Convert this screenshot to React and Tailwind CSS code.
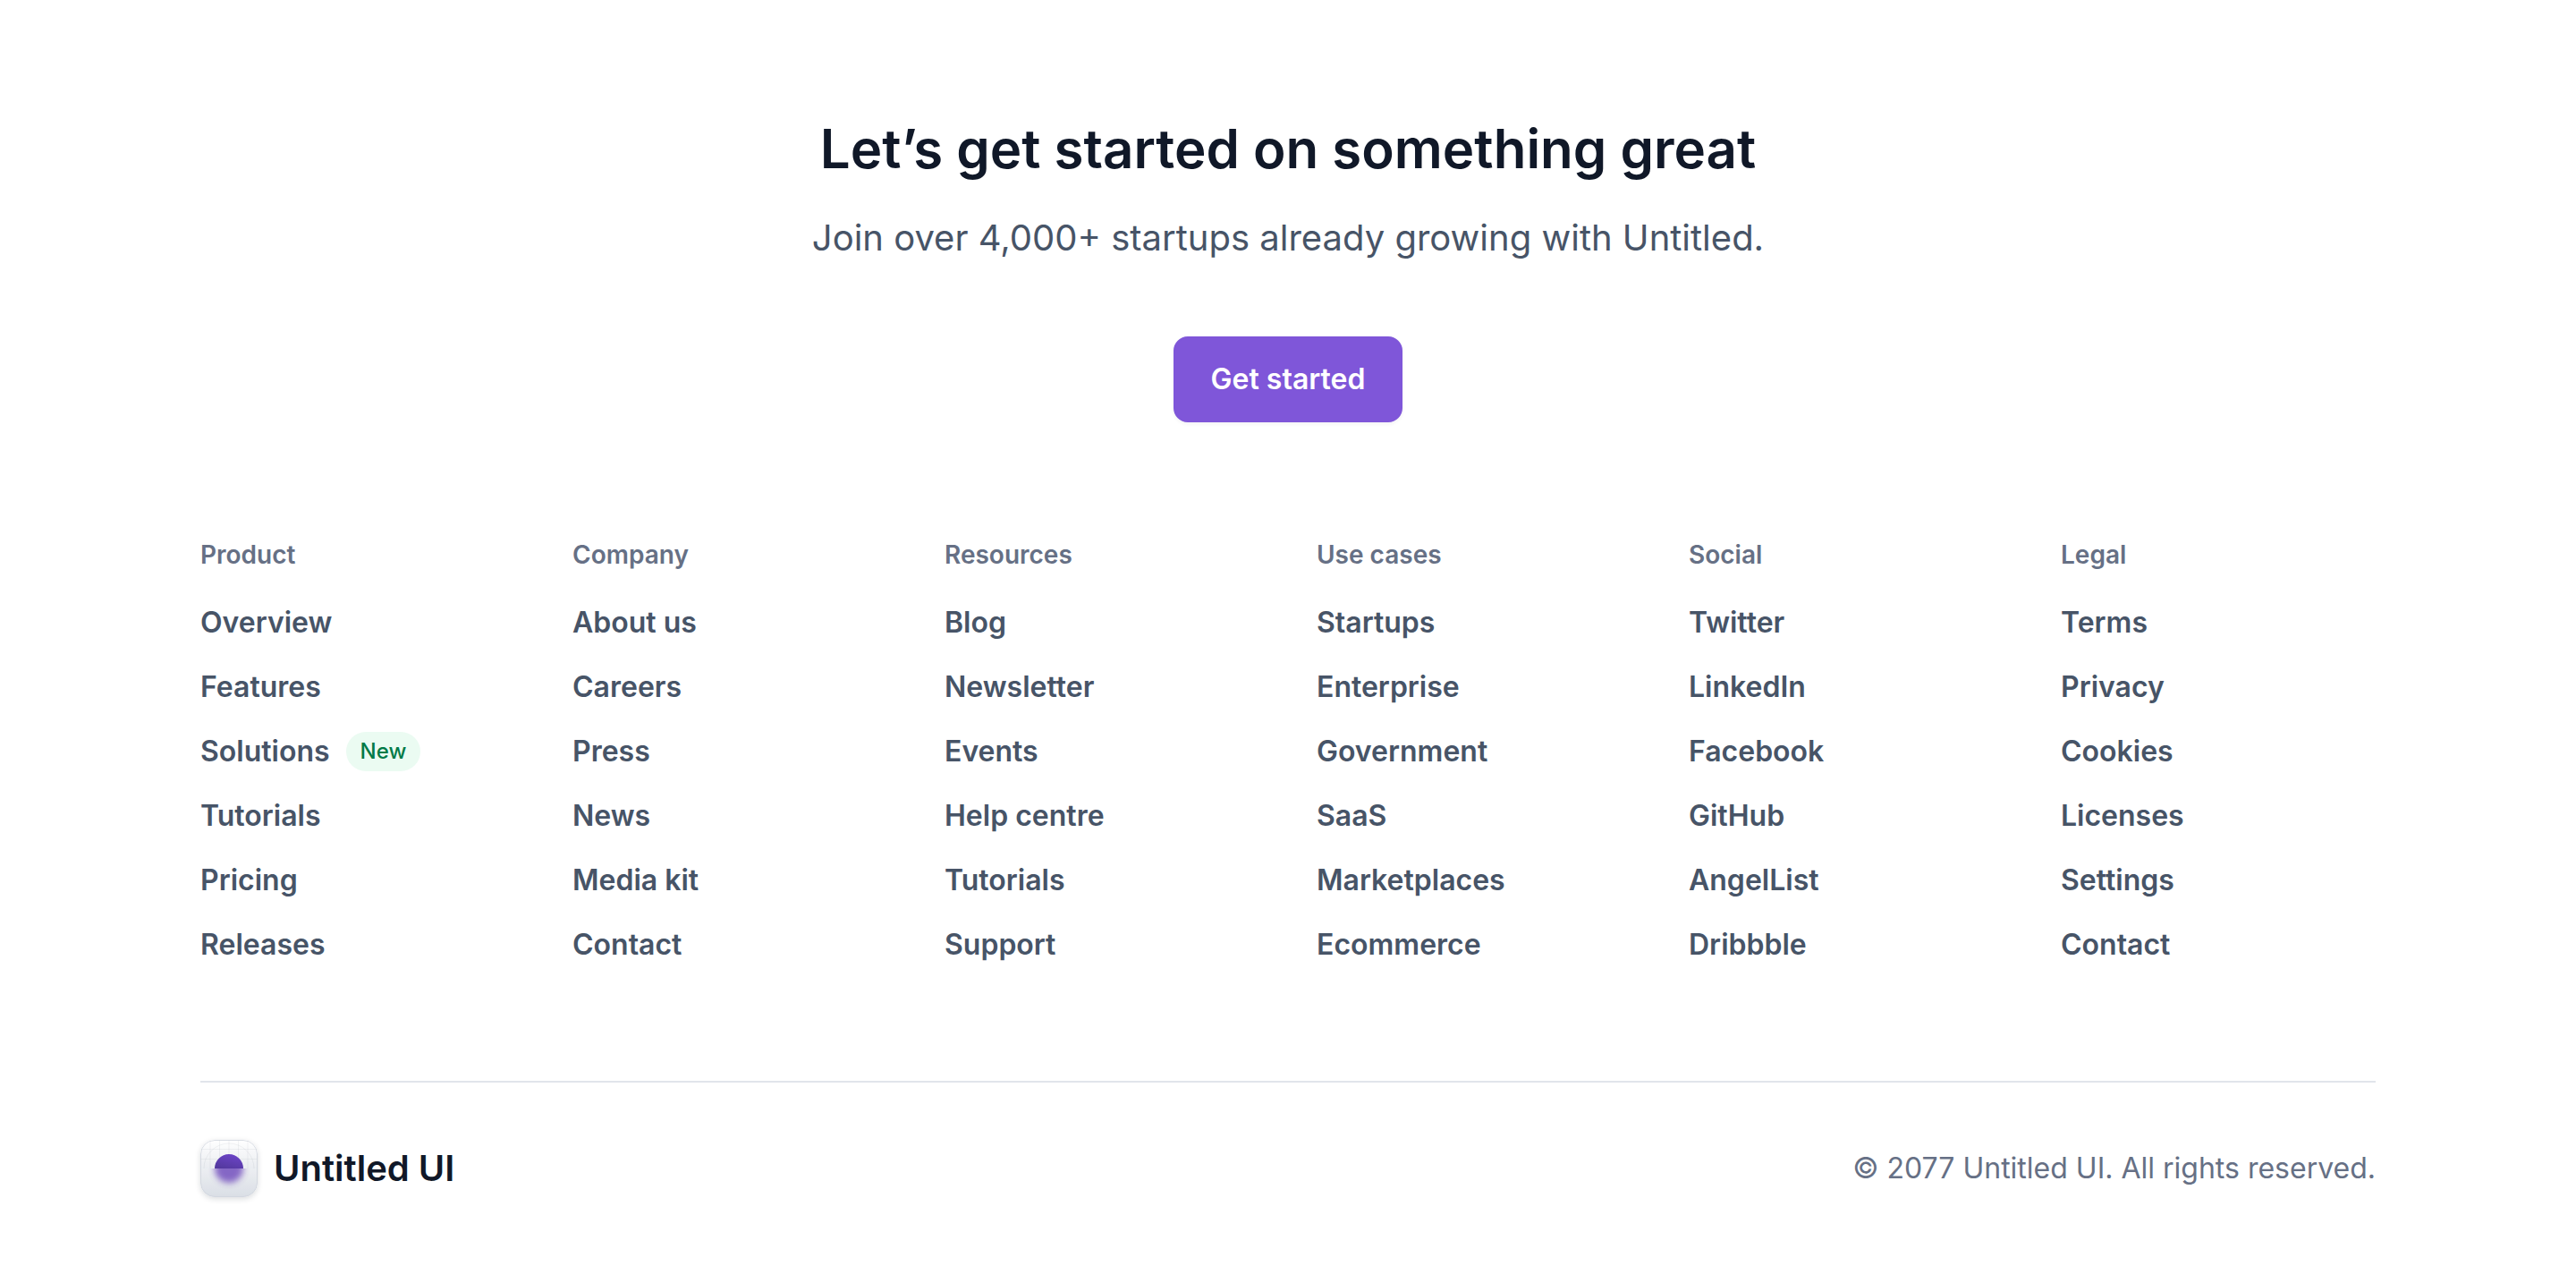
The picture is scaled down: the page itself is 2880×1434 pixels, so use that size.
const columns = [
  ["Product", ["Overview", "Features", "Solutions", "Tutorials", "Pricing", "Releases"]],
  ["Company", ["About us", "Careers", "Press", "News", "Media kit", "Contact"]],
  ["Resources", ["Blog", "Newsletter", "Events", "Help centre", "Tutorials", "Support"]],
  ["Use cases", ["Startups", "Enterprise", "Government", "SaaS", "Marketplaces", "Ecommerce"]],
  ["Social", ["Twitter", "LinkedIn", "Facebook", "GitHub", "AngelList", "Dribbble"]],
  ["Legal", ["Terms", "Privacy", "Cookies", "Licenses", "Settings", "Contact"]],
];

function LogoMark() {
  return (
    <svg viewBox="0 0 64 64" className="size-16 shrink-0 rounded-2xl shadow-[0_2px_6px_rgba(16,24,40,0.15)]" aria-hidden="true">
      <defs>
        <linearGradient id="tile" x1="0" y1="0" x2="0" y2="1">
          <stop offset="0" stopColor="#ffffff" />
          <stop offset="1" stopColor="#d5dae2" />
        </linearGradient>
        <linearGradient id="ball" x1="0.25" y1="1" x2="0.75" y2="0">
          <stop offset="0" stopColor="#53389e" />
          <stop offset="1" stopColor="#6d45c8" />
        </linearGradient>
        <filter id="soft" x="-50%" y="-50%" width="200%" height="200%">
          <feGaussianBlur stdDeviation="3.5" />
        </filter>
        <clipPath id="upper"><rect width="64" height="32" /></clipPath>
        <clipPath id="lower"><rect y="32" width="64" height="32" /></clipPath>
      </defs>
      <rect width="64" height="64" rx="16" fill="url(#tile)" />
      <g clipPath="url(#upper)" fill="none" stroke="#667085" strokeOpacity="0.08">
        <path d="M11 1v31M21.5 0v32M32 0v32M42.500 0v32M53 1v31M1 10.500h62M0 21.500h64" />
        <circle cx="32" cy="32" r="28" />
      </g>
      <path d="M16 32a16 16 0 0 1 32 0z" fill="url(#ball)" />
      <g clipPath="url(#lower)">
        <circle cx="32" cy="32" r="16" fill="#6039b5" filter="url(#soft)" opacity="0.85" />
        <rect y="32" width="64" height="32" fill="#ffffff" fillOpacity="0.12" />
      </g>
      <rect x="0.5" y="0.5" width="63" height="63" rx="15.5" fill="none" stroke="#d0d5dd" strokeOpacity="0.8" />
    </svg>
  );
}

export default function App() {
  return (
    <footer className="bg-white px-56 pt-32 pb-24 font-['Inter',sans-serif] text-[#475467]">
      <section className="flex flex-col items-center text-center">
        <h2 className="text-[60px] leading-[76px] font-semibold text-[#101828]">Let’s get started on something great</h2>
        <p className="mt-8 text-[40px] leading-[60px]">Join over 4,000+ startups already growing with Untitled.</p>
        <button type="button" className="mt-20 h-24 rounded-2xl border-2 border-[#7f56d9] bg-[#7f56d9] px-10 text-[32px] leading-[48px] font-semibold text-white shadow-[0_2px_4px_rgba(16,24,40,0.05)]">Get started</button>
      </section>
      <nav className="mt-32 grid grid-cols-6 gap-16">
        {columns.map(([title, links]) => (
          <div key={title}>
            <h3 className="text-[28px] leading-[40px] font-semibold text-[#667085]">{title}</h3>
            <ul className="mt-8 flex flex-col gap-6">
              {links.map((label) => (
                <li key={label} className="flex h-12 items-center gap-[18px]">
                  <a href="#" className="text-[32px] leading-[48px] font-semibold">{label}</a>
                  {label === "Solutions" && (
                    <span className="rounded-full bg-[#ebfbf2] px-4 py-1 text-[24px] leading-[36px] font-medium text-[#027a48]">New</span>
                  )}
                </li>
              ))}
            </ul>
          </div>
        ))}
      </nav>
      <div className="mt-32 flex items-center justify-between border-t-2 border-[#e1e5eb] pt-16">
        <a href="#" className="flex items-center gap-[18px] text-[40px] leading-[48px] font-semibold text-[#101828]"><LogoMark />Untitled UI</a>
        <p className="text-[32px] leading-[48px] text-[#667085]">© 2077 Untitled UI. All rights reserved.</p>
      </div>
    </footer>
  );
}
